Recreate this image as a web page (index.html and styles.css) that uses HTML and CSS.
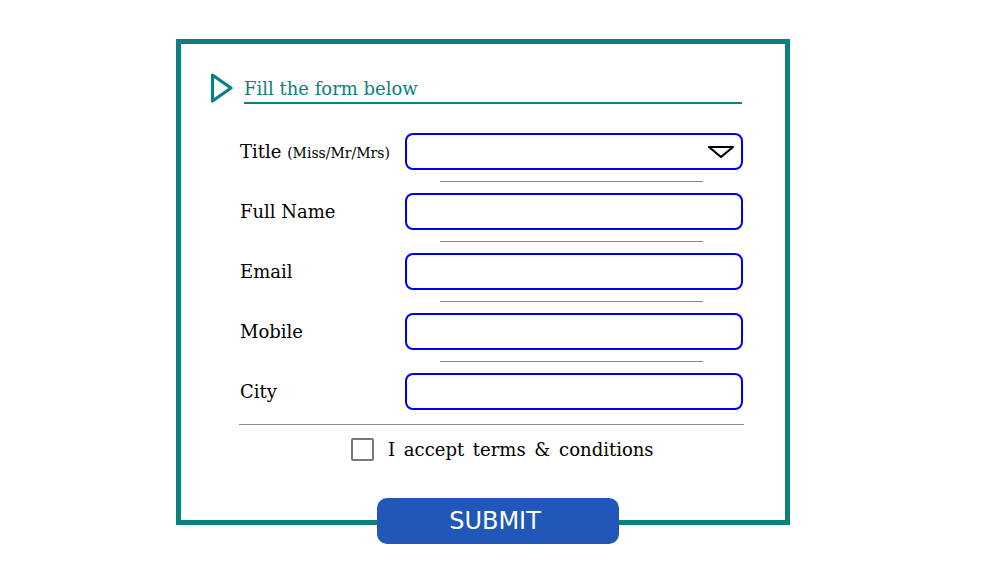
FILE: index.html
```html
<!DOCTYPE html>
<html>
<head>
<meta charset="utf-8">
<link rel="stylesheet" href="styles.css">
</head>
<body>
<form class="frame">
  <div class="header">
    <svg class="play" width="24" height="30" viewBox="0 0 24 30"><path d="M2.5 2 L21 15 L2.5 28 Z" fill="none" stroke="#0b807d" stroke-width="3.2" stroke-linejoin="round"/></svg>
    <div class="heading">Fill the form below</div>
  </div>
  <div class="fields">
    <div class="row">
      <label class="label">Title <span class="small">(Miss/Mr/Mrs)</span></label>
      <div class="input select">
        <svg class="arrow" width="28" height="14" viewBox="0 0 28 14"><path d="M2 2 L26 2 L14 12 Z" fill="none" stroke="#000" stroke-width="2.2" stroke-linejoin="round"/></svg>
      </div>
    </div>
    <div class="sep"></div>
    <div class="row">
      <label class="label">Full Name</label>
      <div class="input"></div>
    </div>
    <div class="sep"></div>
    <div class="row">
      <label class="label">Email</label>
      <div class="input"></div>
    </div>
    <div class="sep"></div>
    <div class="row">
      <label class="label">Mobile</label>
      <div class="input"></div>
    </div>
    <div class="sep"></div>
    <div class="row">
      <label class="label">City</label>
      <div class="input"></div>
    </div>
  </div>
  <div class="rule"></div>
  <div class="terms">
    <span class="box"></span>
    <span class="terms-text">I accept terms &amp; conditions</span>
  </div>
  <div class="submit">SUBMIT</div>
</form>
</body>
</html>
```
FILE: styles.css
```css
html, body {
  margin: 0;
  padding: 0;
  background: #fff;
}
body {
  width: 985px;
  height: 578px;
  overflow: hidden;
  font-family: "DejaVu Serif", serif;
}
.frame {
  box-sizing: border-box;
  width: 614px;
  margin: 39px 0 0 176px;
  border: 5px solid #0b807d;
  padding: 29px 0 0 29px;
  display: flex;
  flex-direction: column;
}
.header {
  display: flex;
  align-items: flex-start;
  gap: 8px;
  height: 35px;
}
.play {
  display: block;
  margin-top: 0;
}
.heading {
  width: 498px;
  margin-left: 2px;
  color: #0b807d;
  font-size: 18px;
  line-height: 24px;
  padding-top: 4px;
  border-bottom: 2px solid #0b807d;
  padding-bottom: 1px;
}
.fields {
  display: flex;
  flex-direction: column;
  padding-left: 30px;
  margin-top: 25px;
}
.row {
  display: flex;
  align-items: center;
  height: 37px;
}
.label {
  width: 165px;
  font-size: 18px;
  color: #000;
}
.small {
  font-size: 14px;
}
.input {
  box-sizing: border-box;
  width: 338px;
  height: 37px;
  border: 2px solid #0000f0;
  border-radius: 8px;
  display: flex;
  align-items: center;
  justify-content: flex-end;
  padding-right: 6px;
}
.sep {
  width: 263px;
  height: 1px;
  background: #8a8a8a;
  margin: 11px 0 11px 200px;
}
.rule {
  width: 505px;
  height: 1px;
  background: #8a8a8a;
  margin: 14px 0 0 29px;
}
.terms {
  display: flex;
  align-items: center;
  margin: 12px 0 0 141px;
  height: 24px;
}
.box {
  box-sizing: border-box;
  width: 23px;
  height: 23px;
  border: 2px solid #777;
  border-radius: 2px;
}
.terms-text {
  margin-left: 14px;
  font-size: 18px;
  word-spacing: 3px;
  color: #000;
}
.submit {
  box-sizing: border-box;
  width: 242px;
  height: 46px;
  margin: 37px 0 -24px 167px;
  padding-right: 6px;
  background: #2057b8;
  border-radius: 10px;
  color: #fff;
  font-family: "DejaVu Sans", sans-serif;
  font-size: 24px;
  display: flex;
  align-items: center;
  justify-content: center;
  position: relative;
}
```
